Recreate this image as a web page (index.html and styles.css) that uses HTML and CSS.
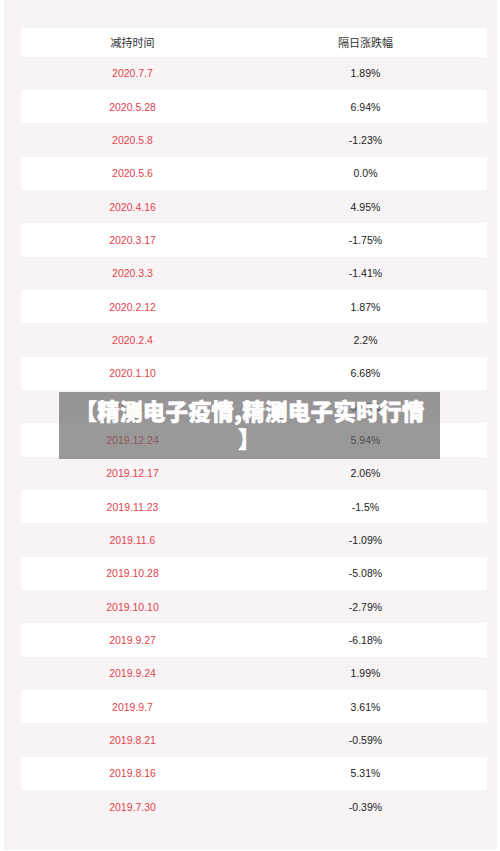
FILE: index.html
```html
<!DOCTYPE html>
<html lang="zh-CN">
<head>
<meta charset="utf-8">
<title>精测电子疫情</title>
<link rel="stylesheet" href="styles.css">
</head>
<body>
<div class="panel">
  <div class="table">
    <div class="row head"><div class="c1">减持时间</div><div class="c2">隔日涨跌幅</div></div>
    <div class="row"><div class="c1 date">2020.7.7</div><div class="c2">1.89%</div></div>
    <div class="row"><div class="c1 date">2020.5.28</div><div class="c2">6.94%</div></div>
    <div class="row"><div class="c1 date">2020.5.8</div><div class="c2">-1.23%</div></div>
    <div class="row"><div class="c1 date">2020.5.6</div><div class="c2">0.0%</div></div>
    <div class="row"><div class="c1 date">2020.4.16</div><div class="c2">4.95%</div></div>
    <div class="row"><div class="c1 date">2020.3.17</div><div class="c2">-1.75%</div></div>
    <div class="row"><div class="c1 date">2020.3.3</div><div class="c2">-1.41%</div></div>
    <div class="row"><div class="c1 date">2020.2.12</div><div class="c2">1.87%</div></div>
    <div class="row"><div class="c1 date">2020.2.4</div><div class="c2">2.2%</div></div>
    <div class="row"><div class="c1 date">2020.1.10</div><div class="c2">6.68%</div></div>
    <div class="row"><div class="c1 date">2020.1.3</div><div class="c2">6.16%</div></div>
    <div class="row"><div class="c1 date">2019.12.24</div><div class="c2">5.94%</div></div>
    <div class="row"><div class="c1 date">2019.12.17</div><div class="c2">2.06%</div></div>
    <div class="row"><div class="c1 date">2019.11.23</div><div class="c2">-1.5%</div></div>
    <div class="row"><div class="c1 date">2019.11.6</div><div class="c2">-1.09%</div></div>
    <div class="row"><div class="c1 date">2019.10.28</div><div class="c2">-5.08%</div></div>
    <div class="row"><div class="c1 date">2019.10.10</div><div class="c2">-2.79%</div></div>
    <div class="row"><div class="c1 date">2019.9.27</div><div class="c2">-6.18%</div></div>
    <div class="row"><div class="c1 date">2019.9.24</div><div class="c2">1.99%</div></div>
    <div class="row"><div class="c1 date">2019.9.7</div><div class="c2">3.61%</div></div>
    <div class="row"><div class="c1 date">2019.8.21</div><div class="c2">-0.59%</div></div>
    <div class="row"><div class="c1 date">2019.8.16</div><div class="c2">5.31%</div></div>
    <div class="row"><div class="c1 date">2019.7.30</div><div class="c2">-0.39%</div></div>
  </div>
</div>
<div class="overlay">【精测电子疫情,精测电子实时行情<br>】</div>
</body>
</html>
```
FILE: styles.css
```css
html, body {
  margin: 0;
  padding: 0;
  background: #ffffff;
}
body {
  width: 500px;
  height: 851px;
  overflow: hidden;
  position: relative;
  font-family: "Liberation Sans", Arial, "Noto Sans CJK SC", sans-serif;
}
.panel {
  margin-left: 4px;
  width: 493px;
  height: 850px;
  background: #f8f4f5;
  padding: 28px 0 0 17px;
  box-sizing: border-box;
}
.table {
  width: 466px;
  display: flex;
  flex-direction: column;
}
.row {
  display: grid;
  grid-template-columns: 223px 243px;
  height: 33.333px;
  align-items: center;
  font-size: 10.5px;
  color: #222222;
}
.row:nth-child(odd) {
  background: #ffffff;
}
.row.head {
  height: 28.67px;
  font-family: "Noto Sans CJK SC", sans-serif;
  font-size: 11px;
  color: #333333;
}
.c1, .c2 {
  text-align: center;
}
.date {
  color: #e3434d;
}
.overlay {
  position: absolute;
  left: 59px;
  top: 392px;
  width: 381px;
  height: 67px;
  box-sizing: border-box;
  padding-top: 4px;
  background: rgba(100, 98, 98, 0.65);
  color: #ffffff;
  font-family: "Noto Sans CJK SC", sans-serif;
  font-weight: 900;
  font-size: 22.5px;
  line-height: 28px;
  letter-spacing: 0.3px;
  -webkit-text-stroke: 0.6px #ffffff;
  text-align: center;
}
```
